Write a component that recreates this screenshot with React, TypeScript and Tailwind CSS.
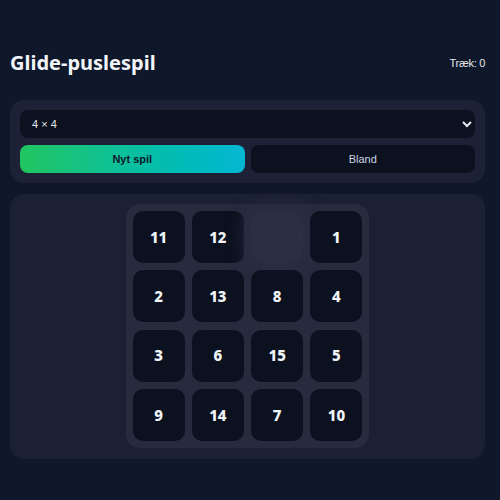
import React, { useState } from 'react'

const START = [11, 12, 0, 1, 2, 13, 8, 4, 3, 6, 15, 5, 9, 14, 7, 10]

export default function App() {
  const [tiles, setTiles] = useState<number[]>(START)
  const [moves, setMoves] = useState(0)
  const [size, setSize] = useState('4')

  const move = (idx: number) => {
    const empty = tiles.indexOf(0)
    const r = Math.floor(idx / 4), c = idx % 4
    const er = Math.floor(empty / 4), ec = empty % 4
    if (Math.abs(r - er) + Math.abs(c - ec) !== 1) return
    const next = [...tiles]
    next[empty] = next[idx]
    next[idx] = 0
    setTiles(next)
    setMoves(m => m + 1)
  }

  return (
    <div className="min-h-[500px] bg-[#0f172a] pl-[10px] pr-[15px] pt-[40px] font-['Noto_Sans',sans-serif] text-slate-200">
      <div className="flex h-[46px] items-center justify-between">
        <h1 className="text-[20px] font-bold text-slate-100">Glide-puslespil</h1>
        <span className="font-['Liberation_Sans',sans-serif] text-[11px] tracking-[-0.3px] text-[#e5e7eb]">Træk: {moves}</span>
      </div>

      <div className="mt-[14px] flex flex-col gap-[7px] rounded-[14px] bg-[#1c2135] p-[10px] font-['Liberation_Sans',sans-serif]">
        <select
          value={size}
          onChange={e => setSize(e.target.value)}
          className="h-[28px] w-full rounded-[8px] bg-[#0c111f] px-[8px] text-[11px] text-slate-200 outline-none"
        >
          <option value="3">3 × 3</option>
          <option value="4">4 × 4</option>
          <option value="5">5 × 5</option>
        </select>
        <div className="flex gap-[6px]">
          <button className="h-[28px] flex-1 rounded-[8px] bg-gradient-to-r from-[#22c55e] to-[#06b6d4] text-[11px] font-semibold text-[#0f172a]">
            Nyt spil
          </button>
          <button
            onClick={() => { setTiles([...START].sort(() => Math.random() - 0.5)); setMoves(0) }}
            className="h-[28px] flex-1 rounded-[8px] bg-[#0c111f] text-[11px] text-slate-300"
          >
            Bland
          </button>
        </div>
      </div>

      <div className="mt-[11px] flex justify-center rounded-[14px] bg-[#1b2032] pb-[11px] pt-[10px]">
        <div className="grid grid-cols-4 gap-[7.3px] rounded-[14px] bg-[#262b3e] p-[7px]">
          {tiles.map((t, i) =>
            t === 0 ? (
              <div key="empty" className="h-[52px] w-[52px] rounded-[14px] bg-[#2a2f43] shadow-[0_0_18px_6px_rgba(42,47,67,0.9)]" />
            ) : (
              <button
                key={t}
                onClick={() => move(i)}
                className="flex h-[52px] w-[52px] items-center justify-center rounded-[10px] bg-[#0c111f] text-[15px] font-extrabold text-slate-100"
              >
                {t}
              </button>
            )
          )}
        </div>
      </div>
    </div>
  )
}
